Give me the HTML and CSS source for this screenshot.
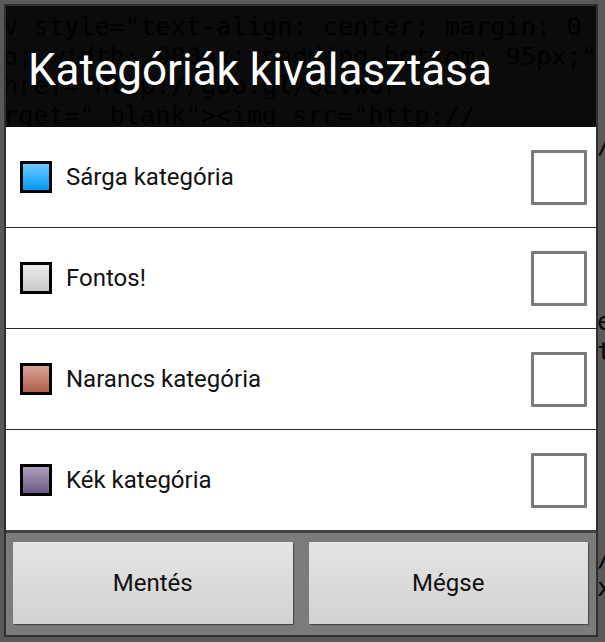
FILE: index.html
```html
<!DOCTYPE html>
<html lang="hu">
<head>
<meta charset="utf-8">
<title>Kategóriák kiválasztása</title>
<link rel="stylesheet" href="styles.css">
</head>
<body>
<div class="screen">
<pre class="code">v style="text-align: center; margin: 0
o; width: 980px; padding-bottom: 95px;"
href="http://goo.gl/QeVwOr
rget="_blank"&gt;&lt;img src="http://
/-Q8dkLq3PXkzM/UrqGn3Vn5CI/AAAAAAAAACUs/
gSTmN0kQhXo/s1600/android-dialog.png" x
.height="642" width="605" alt="" border /
:0"/&gt;&lt;/a&gt;&lt;/div&gt; &lt;div class="post-body n
 &lt;p&gt;Ez egy egyszerű példa a kategóriák
 kiválasztására egy párbeszédablakban,
 amely a beállításokat menti el. &lt;/p&gt;  e
&lt;div class="separator" style="clear: bot
 th; text-align: center;"&gt;&lt;a href="ht
 tp://goo.gl/QeVwOr" imageanchor="1" st
 yle="margin-left: 1em; margin-right: 1
 em;"&gt;&lt;img border="0" height="320" sr
 c="http://3.bp.blogspot.com/-kXq/Ur4/
 AAAAAAAACVc/s320/dialog.png" width="3
  00" /&gt;&lt;/a&gt;&lt;/div&gt; &lt;p&gt;A gombok: Mentés /
g és Mégse.&lt;/p&gt; &lt;div style="clear:both x
 h;"&gt;&lt;/div&gt; &lt;/div&gt; &lt;!-- end post --&gt;
</pre>
<div class="dialog">
  <div class="title">Kategóriák kiválasztása</div>
  <div class="list">
    <div class="row">
      <span class="swatch swatch-blue"></span>
      <span class="label">Sárga kategória</span>
      <span class="check"></span>
    </div>
    <div class="row">
      <span class="swatch swatch-grey"></span>
      <span class="label">Fontos!</span>
      <span class="check"></span>
    </div>
    <div class="row">
      <span class="swatch swatch-orange"></span>
      <span class="label">Narancs kategória</span>
      <span class="check"></span>
    </div>
    <div class="row">
      <span class="swatch swatch-purple"></span>
      <span class="label">Kék kategória</span>
      <span class="check"></span>
    </div>
  </div>
  <div class="buttons">
    <button class="btn">Mentés</button>
    <button class="btn">Mégse</button>
  </div>
</div>
</div>
</body>
</html>
```
FILE: styles.css
```css
html, body {
  margin: 0;
  padding: 0;
}
body {
  background: #595959;
  overflow: hidden;
  font-family: Roboto, "Noto Sans", "Liberation Sans", sans-serif;
}
.screen {
  display: grid;
  width: 605px;
  height: 642px;
  overflow: hidden;
}
.code, .dialog {
  grid-area: 1 / 1;
}
.code {
  margin: 0;
  padding: 12px 0 0 3px;
  font-family: "DejaVu Sans Mono", "Liberation Mono", monospace;
  font-size: 25.3px;
  line-height: 29.5px;
  color: #050505;
  white-space: pre;
  overflow: hidden;
}
.dialog {
  position: relative;
  z-index: 1;
  margin: 4px 0 0 4px;
  width: 590px;
  height: 629px;
  border: 2px solid #2f2f2f;
  display: flex;
  flex-direction: column;
  align-self: start;
  justify-self: start;
}
.title {
  height: 121px;
  box-sizing: border-box;
  flex: none;
  background: rgba(0, 0, 0, 0.88);
  color: #ffffff;
  font-size: 44px;
  line-height: 52px;
  padding: 38px 0 0 22px;
}
.list {
  background: #ffffff;
  flex: none;
}
.row {
  height: 101px;
  box-sizing: border-box;
  border-bottom: 1px solid #2a2a2a;
  display: flex;
  align-items: center;
  padding: 0 9px 0 14px;
}
.row:last-child {
  border-bottom: none;
  height: 100px;
}
.swatch {
  width: 32px;
  height: 32px;
  box-sizing: border-box;
  border: 3px solid #000000;
  flex: none;
}
.swatch-blue { background: linear-gradient(#6ccbff, #0097ff); }
.swatch-grey { background: linear-gradient(#ececec, #c9c9c9); }
.swatch-orange { background: linear-gradient(#d9a496, #b05e4c); }
.swatch-purple { background: linear-gradient(#ab9fbc, #6c5c86); }
.label {
  margin-left: 14px;
  font-size: 24px;
  color: #111111;
}
.check {
  margin-left: auto;
  width: 56px;
  height: 55px;
  box-sizing: border-box;
  border: 3px solid #7a7a7a;
  border-radius: 1px;
  background: #ffffff;
  flex: none;
}
.buttons {
  flex: 1;
  background: #7b7b7b;
  border-top: 3px solid #444444;
  display: flex;
  gap: 16px;
  padding: 9px 8px 11px 7px;
}
.btn {
  flex: 1;
  height: 82px;
  border: none;
  border-radius: 1px;
  background: linear-gradient(#e4e4e4, #d2d2d2);
  box-shadow: 1px 1px 1px rgba(0, 0, 0, 0.45);
  font-family: Roboto, "Noto Sans", "Liberation Sans", sans-serif;
  font-size: 24px;
  color: #111111;
  padding: 0;
}
```
